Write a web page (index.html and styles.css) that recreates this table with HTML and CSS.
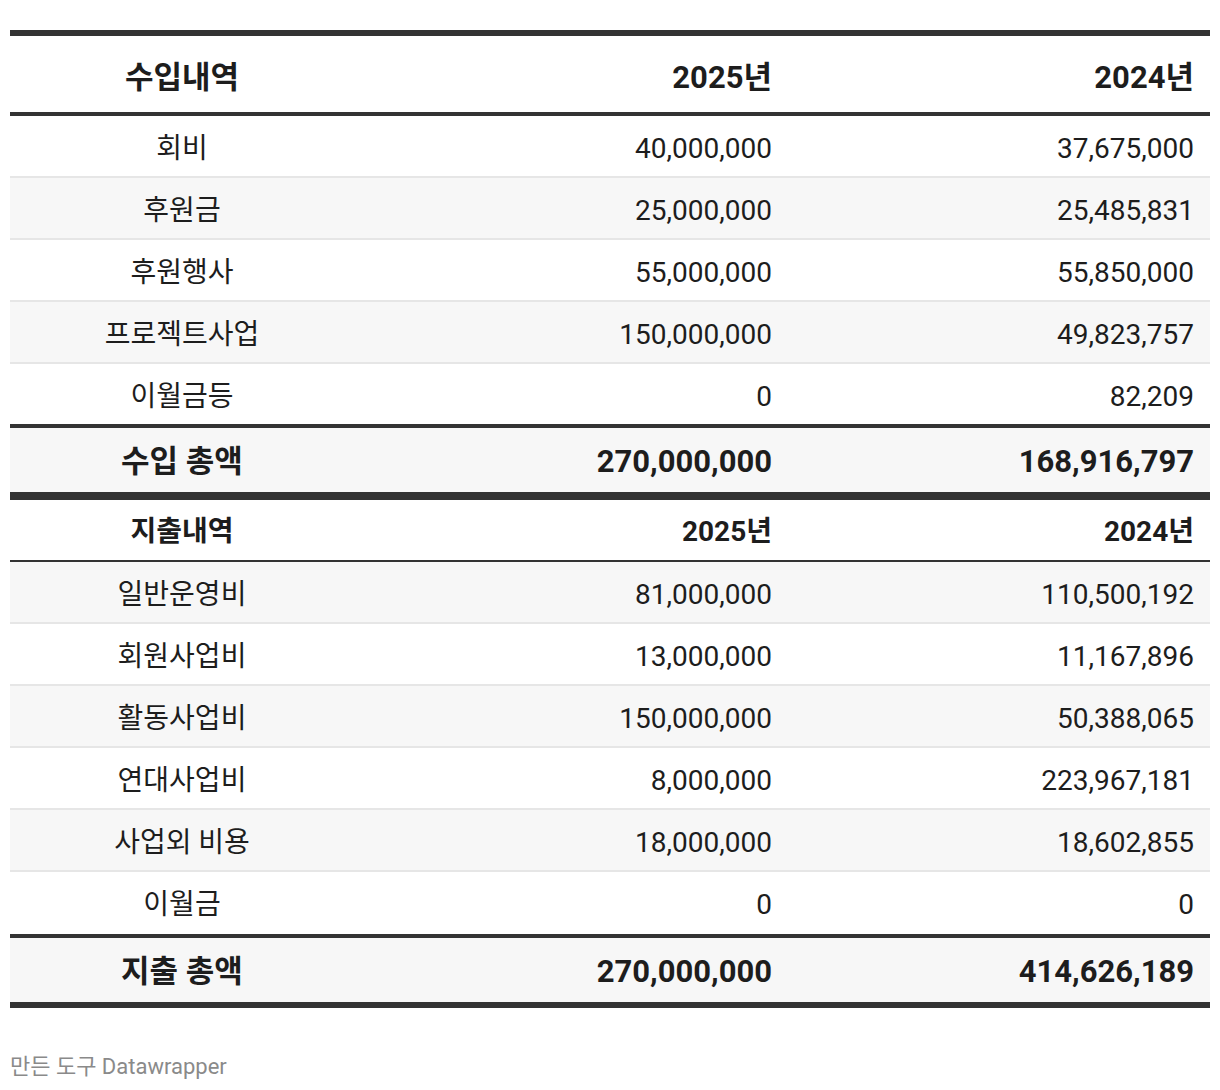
FILE: index.html
```html
<!DOCTYPE html>
<html lang="ko">
<head>
<meta charset="utf-8">
<link rel="stylesheet" href="styles.css">
</head>
<body>
<div class="wrap">
<table class="fin">
  <colgroup><col class="c1"><col class="c2"><col class="c3"></colgroup>
  <thead>
    <tr class="head1"><th class="lab">수입내역</th><th>2025년</th><th>2024년</th></tr>
  </thead>
  <tbody>
    <tr class="first"><td class="lab">회비</td><td>40,000,000</td><td>37,675,000</td></tr>
    <tr class="alt"><td class="lab">후원금</td><td>25,000,000</td><td>25,485,831</td></tr>
    <tr><td class="lab">후원행사</td><td>55,000,000</td><td>55,850,000</td></tr>
    <tr class="alt"><td class="lab">프로젝트사업</td><td>150,000,000</td><td>49,823,757</td></tr>
    <tr><td class="lab">이월금등</td><td>0</td><td>82,209</td></tr>
    <tr class="total mid"><td class="lab">수입 총액</td><td>270,000,000</td><td>168,916,797</td></tr>
    <tr class="head2"><td class="lab">지출내역</td><td>2025년</td><td>2024년</td></tr>
    <tr class="alt first"><td class="lab">일반운영비</td><td>81,000,000</td><td>110,500,192</td></tr>
    <tr><td class="lab">회원사업비</td><td>13,000,000</td><td>11,167,896</td></tr>
    <tr class="alt"><td class="lab">활동사업비</td><td>150,000,000</td><td>50,388,065</td></tr>
    <tr><td class="lab">연대사업비</td><td>8,000,000</td><td>223,967,181</td></tr>
    <tr class="alt"><td class="lab">사업외 비용</td><td>18,000,000</td><td>18,602,855</td></tr>
    <tr class="last"><td class="lab">이월금</td><td>0</td><td>0</td></tr>
    <tr class="total end"><td class="lab">지출 총액</td><td>270,000,000</td><td>414,626,189</td></tr>
  </tbody>
</table>
<p class="credit">만든 도구 Datawrapper</p>
</div>
</body>
</html>
```

FILE: styles.css
```css
html, body {
  margin: 0;
  padding: 0;
  background: #ffffff;
}
body {
  padding: 30px 10px 0 10px;
  font-family: Roboto, "Noto Sans CJK KR", sans-serif;
  color: #1d1d1d;
}
.fin {
  width: 1200px;
  border-collapse: separate;
  border-spacing: 0;
  table-layout: fixed;
}
.c1 { width: 344px; }
.c2 { width: 434px; }
.c3 { width: 422px; }

.fin th, .fin td {
  padding: 15px 16px 9px 16px;
  text-align: right;
  font-size: 28px;
  line-height: 36px;
  font-weight: 400;
  white-space: nowrap;
}
.fin .lab { text-align: center; }

.head1 th {
  font-size: 31px;
  line-height: 40px;
  font-weight: 700;
  padding-top: 22px;
  padding-bottom: 14px;
  border-top: 6px solid #333333;
  border-bottom: 4px solid #333333;
}
.fin tbody tr td { border-top: 2px solid #e6e6e6; }
.fin tbody tr.first td { border-top: 0; }
.fin tr.alt td { background: #f7f7f7; }
.fin tr.last td { padding-bottom: 11px; }

.fin tr.total td {
  background: #f7f7f7;
  font-weight: 700;
  font-size: 31px;
  line-height: 40px;
  padding-top: 14px;
  padding-bottom: 10px;
  border-top: 4px solid #333333;
}
.fin tr.total.mid td { border-bottom: 8px solid #333333; }
.fin tr.total.end td { border-bottom: 6px solid #333333; }

.fin tr.head2 td {
  font-weight: 700;
  border-top: 0;
  padding-top: 14px;
  padding-bottom: 10px;
  border-bottom: 2px solid #333333;
}

.credit {
  margin: 44px 0 0 0;
  font-size: 22px;
  line-height: 30px;
  color: #8a8a8a;
}
```
